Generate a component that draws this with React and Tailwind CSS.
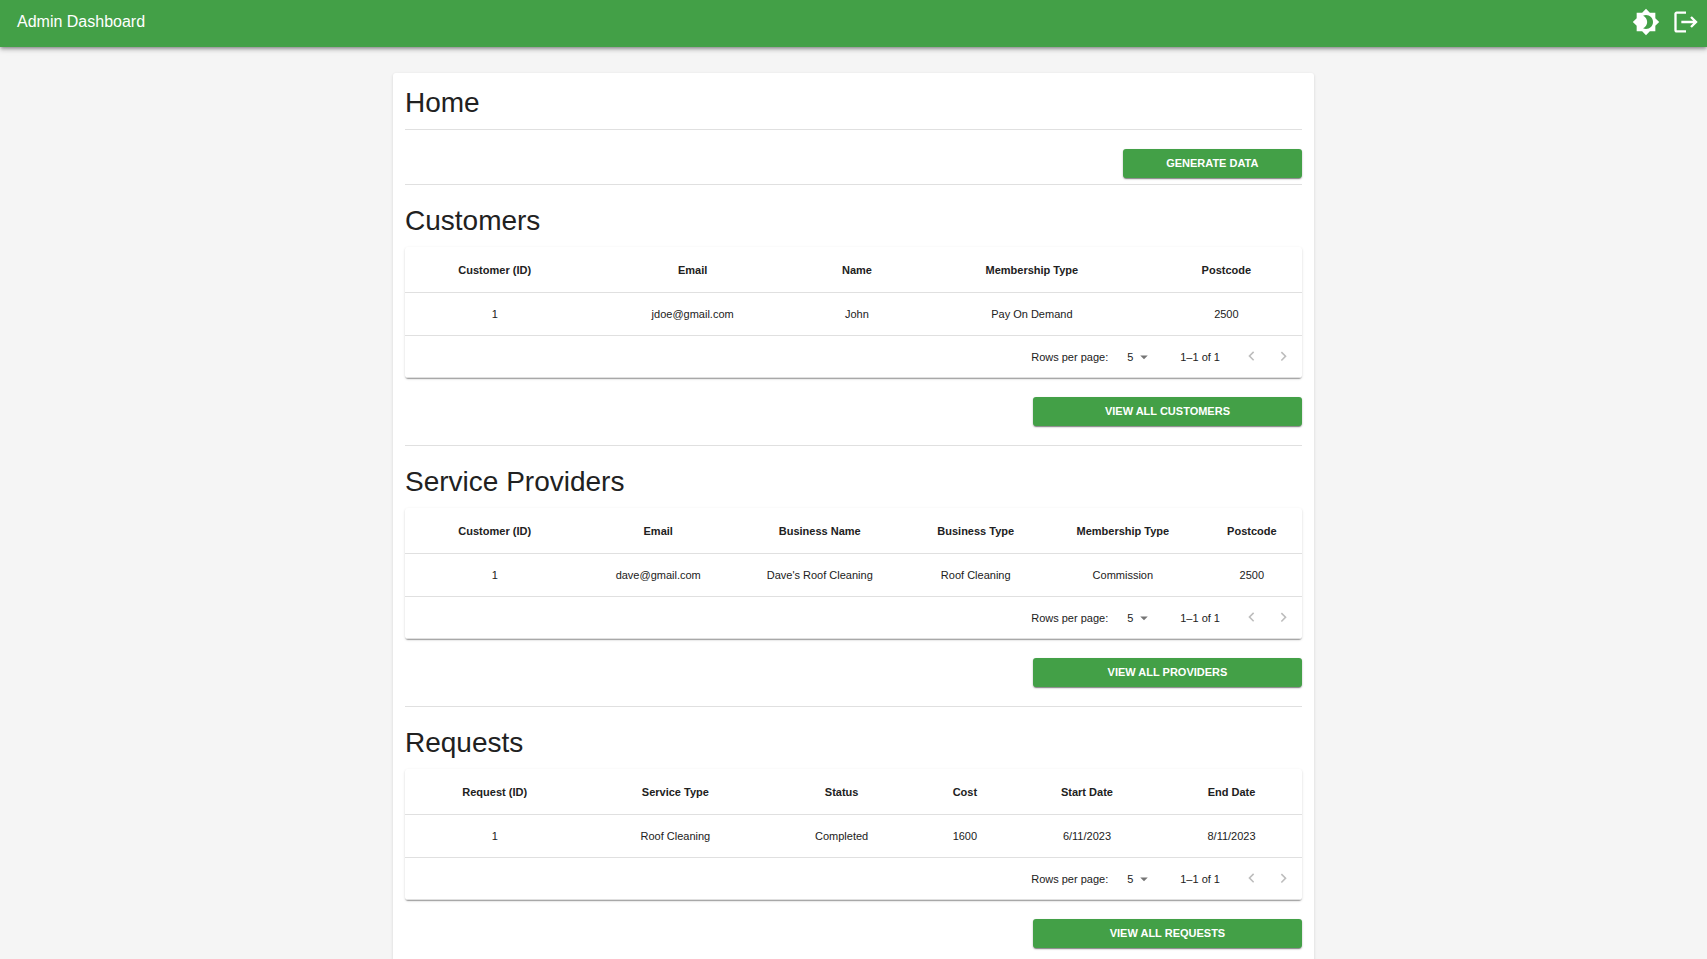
import React from "react";

const sections = [
  {
    title: "Customers",
    action: "View all customers",
    columns: ["Customer (ID)", "Email", "Name", "Membership Type", "Postcode"],
    rows: [["1", "jdoe@gmail.com", "John", "Pay On Demand", "2500"]],
  },
  {
    title: "Service Providers",
    action: "View all providers",
    columns: ["Customer (ID)", "Email", "Business Name", "Business Type", "Membership Type", "Postcode"],
    rows: [["1", "dave@gmail.com", "Dave's Roof Cleaning", "Roof Cleaning", "Commission", "2500"]],
  },
  {
    title: "Requests",
    action: "View all requests",
    columns: ["Request (ID)", "Service Type", "Status", "Cost", "Start Date", "End Date"],
    rows: [["1", "Roof Cleaning", "Completed", "1600", "6/11/2023", "8/11/2023"]],
  },
];

function Icon({ path, className }) {
  return (
    <svg viewBox="0 0 24 24" fill="currentColor" aria-hidden="true" className={className}>
      <path d={path} />
    </svg>
  );
}

function ActionButton({ children, className }) {
  return (
    <button
      type="button"
      className={`h-[29px] rounded-[3px] bg-[#43a047] pb-[2px] text-[11px] leading-5 font-bold text-white uppercase shadow-[0_2px_1px_-1px_rgba(0,0,0,0.3),0_1px_2px_0_rgba(0,0,0,0.3)] hover:bg-[#388e3c] ${className}`}
    >
      {children}
    </button>
  );
}

function Pagination({ id }) {
  return (
    <div className="flex items-center justify-end pr-[3px]">
      <label htmlFor={id}>Rows per page:</label>
      <div className="relative mr-[27px] ml-[13px] w-8">
        <select id={id} defaultValue="5" className="w-full appearance-none bg-transparent pl-[6px]">
          <option>5</option>
          <option>10</option>
          <option>25</option>
        </select>
        <Icon path="M7 10l5 5 5-5z" className="pointer-events-none absolute top-0 right-0 size-[18px] text-[#757575]" />
      </div>
      <span>1–1 of 1</span>
      <button type="button" disabled aria-label="Previous page" className="ml-[15px] flex size-8 items-center justify-center text-[#bdbdbd]">
        <Icon path="M15.41 16.09l-4.58-4.59 4.58-4.59L14 5.5l-6 6 6 6z" className="size-[19px]" />
      </button>
      <button type="button" disabled aria-label="Next page" className="flex size-8 items-center justify-center text-[#bdbdbd]">
        <Icon path="M8.59 16.34l4.58-4.59-4.58-4.59L10 5.75l6 6-6 6z" className="size-[19px]" />
      </button>
    </div>
  );
}

function Section({ title, action, columns, rows }) {
  const selectId = `rows-${title.toLowerCase().replace(" ", "-")}`;
  return (
    <section className="border-t border-[#e0e0e0] pt-[18px] pb-[19px]">
      <h2 className="mb-2 text-[28px] leading-[36px]">{title}</h2>
      <div className="overflow-x-auto rounded-[3px] shadow-[0_2px_1px_-1px_rgba(0,0,0,0.2),0_1px_1px_0_rgba(0,0,0,0.14),0_1px_3px_0_rgba(0,0,0,0.12)]">
        <table className="w-full border-separate border-spacing-0 text-center text-[11px] leading-[18px]">
          <thead>
            <tr className="h-[46px]">
              {columns.map((column) => (
                <th key={column} className="border-b border-[#e0e0e0] px-[13px] font-bold first:w-1/5">
                  {column}
                </th>
              ))}
            </tr>
          </thead>
          <tbody>
            {rows.map((row) => (
              <tr key={row[0]} className="h-[43px]">
                {row.map((cell, i) => (
                  <td key={columns[i]} className="border-b border-[#e0e0e0] px-[13px]">
                    {cell}
                  </td>
                ))}
              </tr>
            ))}
          </tbody>
          <tfoot>
            <tr className="h-[42px]">
              <td colSpan={columns.length} className="border-b border-[#e0e0e0] p-0">
                <Pagination id={selectId} />
              </td>
            </tr>
          </tfoot>
        </table>
      </div>
      <div className="mt-[19px] flex justify-end">
        <ActionButton className="w-[30%]">{action}</ActionButton>
      </div>
    </section>
  );
}

export default function App() {
  return (
    <div className="min-h-screen bg-[#f5f5f5] font-['Liberation_Sans',Arial,sans-serif] text-[#212121]">
      <header className="flex h-[47px] items-center justify-between bg-[#43a047] pr-[7px] pl-[17px] text-white shadow-[0_2px_3px_-1px_rgba(0,0,0,0.3),0_3px_4px_0_rgba(0,0,0,0.14),0_1px_8px_0_rgba(0,0,0,0.12)]">
        <p className="pb-1 text-base leading-6">Admin Dashboard</p>
        <div className="flex items-center gap-3 pb-[3px]">
          <button type="button" aria-label="Toggle theme">
            <Icon
              path="M20 8.69V4h-4.69L12 .69 8.69 4H4v4.69L.69 12 4 15.31V20h4.69L12 23.31 15.31 20H20v-4.69L23.31 12 20 8.69zM12 18c-.89 0-1.74-.2-2.5-.55C11.56 16.5 13 14.42 13 12s-1.44-4.5-3.5-5.45C10.26 6.2 11.11 6 12 6c3.31 0 6 2.69 6 6s-2.69 6-6 6z"
              className="size-[28px]"
            />
          </button>
          <button type="button" aria-label="Log out">
            <Icon
              path="M17 7l-1.41 1.41L18.17 11H8v2h10.17l-2.58 2.58L17 17l5-5zM4 5h8V3H4c-1.1 0-2 .9-2 2v14c0 1.1.9 2 2 2h8v-2H4V5z"
              className="size-[28px]"
            />
          </button>
        </div>
      </header>
      <main className="mx-auto mt-[26px] max-w-[921px] rounded-[3px] bg-white p-3 shadow-[0_2px_1px_-1px_rgba(0,0,0,0.1),0_1px_3px_0_rgba(0,0,0,0.14)]">
        <h1 className="mb-2 text-[28px] leading-[36px]">Home</h1>
        <div className="flex justify-end border-t border-[#e0e0e0] pt-[19px] pb-[6px]">
          <ActionButton className="w-1/5">Generate data</ActionButton>
        </div>
        {sections.map((section) => (
          <Section key={section.title} {...section} />
        ))}
      </main>
    </div>
  );
}
